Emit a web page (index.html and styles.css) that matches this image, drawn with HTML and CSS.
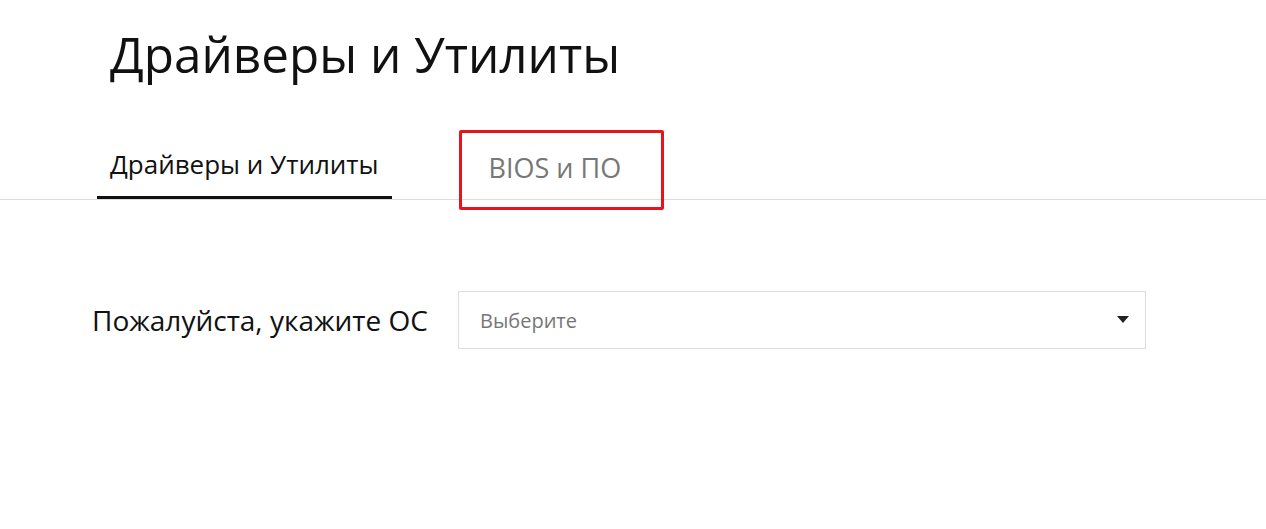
FILE: index.html
```html
<!DOCTYPE html>
<html lang="ru">
<head>
    <meta charset="UTF-8">
    <meta name="viewport" content="width=device-width, initial-scale=1.0">
    <title>Драйверы и Утилиты</title>
    <link rel="stylesheet" href="styles.css">
</head>
<body>
    <h1 class="title">Драйверы и Утилиты</h1>

    <div class="tabs">
        <div class="tab active">Драйверы и Утилиты</div>
        <div class="tab marked">BIOS и ПО</div>
    </div>

    <div class="os-row">
        <label class="os-label" for="os">Пожалуйста, укажите ОС</label>
        <div class="select" id="os">
            <span class="placeholder">Выберите</span>
            <svg class="arrow" width="12" height="8" viewBox="0 0 12 8">
                <path d="M0 0 L12 0 L6 7 Z" fill="#222"/>
            </svg>
        </div>
    </div>
</body>
</html>
```

FILE: styles.css
```css
body {
    margin: 0;
    background: #fff;
    color: #111;
    font-family: "Open Sans", "Noto Sans", sans-serif;
    height: 529px;
    overflow: hidden;
}

.title {
    margin: 0;
    padding: 18px 0 0 110px;
    font-size: 49.4px;
    font-weight: 400;
    line-height: 72px;
}

.tabs {
    display: flex;
    margin-top: 40px;
    border-bottom: 1px solid #ddd;
    height: 70px;
    box-sizing: border-box;
}

.tab {
    font-size: 26px;
    line-height: 70px;
    box-sizing: border-box;
}

.tab.active {
    margin-left: 97px;
    padding: 0 13px;
    border-bottom: 3px solid #111;
    height: 69px;
    line-height: 68px;
}

.tab.marked {
    color: #777;
    font-size: 27px;
    margin-left: 67px;
    height: 80px;
    padding: 0 40px 0 27px;
    border: 3px solid #e8141b;
    border-radius: 2px;
    line-height: 70px;
}

.os-row {
    display: flex;
    align-items: center;
    margin-top: 91px;
    padding-left: 92px;
}

.os-label {
    font-size: 28px;
    width: 366px;
}

.select {
    width: 688px;
    height: 58px;
    border: 1px solid #ddd;
    box-sizing: border-box;
    display: flex;
    align-items: center;
    justify-content: space-between;
    padding: 0 16px 0 21px;
}

.placeholder {
    font-size: 20px;
    color: #777;
}
```
